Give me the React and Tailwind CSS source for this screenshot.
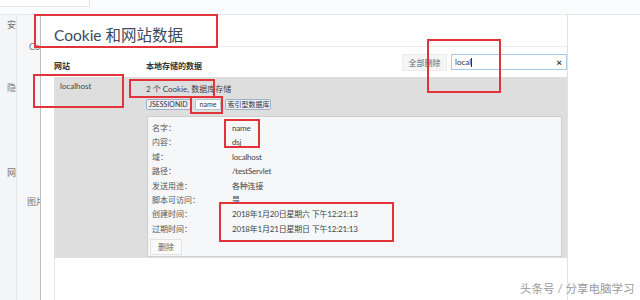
import React from "react";

const rows = [
  ["名字：", "name"],
  ["内容：", "dsj"],
  ["域：", "localhost"],
  ["路径：", "/testServlet"],
  ["发送用途：", "各种连接"],
  ["脚本可访问：", "是"],
  ["创建时间：", "2018年1月20日星期六 下午12:21:13"],
  ["过期时间：", "2018年1月21日星期日 下午12:21:13"],
];

// red annotation boxes drawn over the screenshot
const marks = [
  "left-[34px] top-[14px] w-[184px] h-[34px]",
  "left-[33px] top-[74px] w-[91px] h-[34px]",
  "left-[129px] top-[79px] w-[86px] h-[19px]",
  "left-[190px] top-[96px] w-[33px] h-[18px]",
  "left-[427px] top-[39px] w-[74px] h-[54px]",
  "left-[224px] top-[119px] w-[36px] h-[29px]",
  "left-[219px] top-[202px] w-[175px] h-[40px]",
];

export default function App() {
  return (
    <div className="relative w-[640px] h-[300px] overflow-hidden bg-white font-['Lato','Noto_Sans_CJK_SC',sans-serif] text-[#444]">
      {/* page behind the dialog */}
      <div className="flex h-[15px] border-b border-[#e6e8eb] bg-[#fafbfc]">
        <div className="w-[90px] h-[7px] bg-white border-b border-r border-[#e3e5e8]" />
      </div>

      <div className="flex h-[285px]">
        <div className="w-[17px] bg-[#f3f5f7] border-r border-[#e2e5e8] flex flex-col pt-[5px] pl-[7px] text-[9px] leading-[10px] text-[#777] overflow-hidden">
          <div>安</div>
          <div className="mt-[53px]">隐</div>
          <div className="mt-[75px]">网</div>
        </div>
        <div className="w-[23px] bg-[#f6f7f9] flex flex-col pt-[27px] pl-[12px] text-[9px] leading-[10px] text-[#777] overflow-hidden whitespace-nowrap">
          <div>Co</div>
          <div className="mt-[145px] -ml-[2px]">图片</div>
        </div>

        {/* dialog */}
        <div className="w-[528px] flex flex-col bg-white border-l border-[#b9bcc0] border-r border-r-[#e2e2e2]">
          <div className="h-[32px] shrink-0 border-b border-[#ececec] pl-[13px] pt-[10px] text-[15.5px] leading-[20px] text-[#3d4a5c]">
            Cookie 和网站数据
          </div>

          <div className="flex flex-col flex-1 pl-[13px]">
            <div className="flex h-[30px] shrink-0">
              <div className="w-[92px] pt-[13px] text-[8px] leading-[12px] font-bold text-[#333]">网站</div>
              <div className="flex-1 pt-[13px] text-[8px] leading-[12px] font-bold text-[#333]">本地存储的数据</div>
              <div className="mt-[7px] h-[17px] w-[45px] flex items-center justify-center bg-[#f5f5f5] border border-[#ebebeb] text-[8px] text-[#666]">
                全部删除
              </div>
              <div className="mt-[7px] ml-[4px] h-[16px] w-[116px] flex items-center border border-[#a9c9ea] bg-white pl-[3px] pr-[4px] text-[8px] text-[#333]">
                <span>local</span>
                <span className="w-px h-[9px] bg-[#333]" />
                <span className="ml-auto text-[10px] font-bold leading-none text-[#333]">×</span>
              </div>
            </div>

            <div className="flex h-[181px] shrink-0 bg-[#dedede]">
              <div className="w-[92px] pt-[2px] pl-[6px] text-[8px] leading-[14px] text-[#444]">localhost</div>
              <div className="flex-1 flex flex-col pr-[5px]">
                <div className="pt-[5px] text-[8px] leading-[14px] text-[#444]">2 个 Cookie, 数据库存储</div>
                <div className="flex items-center gap-[4px] mt-[2px] text-[7px] leading-[9px] text-[#334]">
                  <span className="px-[2px] border border-[#9fb1c6] bg-[#e9eef4] rounded-[2px]">JSESSIONID</span>
                  <span className="px-[4px] mt-[1px] border border-[#b9c4d0] bg-white rounded-[2px]">name</span>
                  <span className="px-[1px] border border-[#9fb1c6] bg-[#e9eef4] rounded-[2px]">索引型数据库</span>
                </div>
                <div className="mt-[6px] ml-[1px] h-[141px] border border-[#cfcfcf] bg-[#f5f7f9] pt-[4px] pl-[1px]">
                  <div className="pl-[3px] grid grid-cols-[80px_1fr] text-[8px] leading-[14.4px] text-[#555]">
                    {rows.map(([k, v]) => (
                      <React.Fragment key={k}>
                        <div>{k}</div>
                        <div className="text-[#444] tracking-[-0.2px]">{v}</div>
                      </React.Fragment>
                    ))}
                  </div>
                  <div className="mt-[3px] ml-[1px] w-[32px] h-[16px] flex items-center justify-center bg-[#fafafa] border border-[#e2e2e2] text-[8px] text-[#666]">
                    删除
                  </div>
                </div>
              </div>
            </div>

            <div className="flex-1 border-l border-[#e6e6e6]" />
          </div>
        </div>
        <div className="flex-1 bg-white" />
      </div>

      {marks.map((m) => (
        <div key={m} className={`absolute border-2 border-[#e2333a] ${m}`} />
      ))}

      <div className="absolute left-[520px] top-[282px] text-[11.5px] leading-[14px] text-[#9a9a9a] whitespace-nowrap">
        头条号 / 分享电脑学习
      </div>
    </div>
  );
}
